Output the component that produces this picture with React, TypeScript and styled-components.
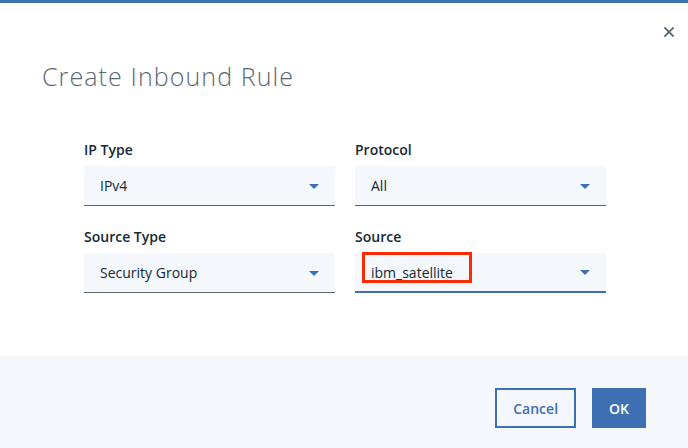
import React from "react";
import styled, { createGlobalStyle } from "styled-components";

const GlobalStyle = createGlobalStyle`
  html, body {
    margin: 0;
    padding: 0;
    background: #ffffff;
  }
  body {
    font-family: "Open Sans", "Noto Sans", sans-serif;
    color: #152935;
  }
  * {
    box-sizing: border-box;
  }
`;

interface Field {
  label: string;
  value: string;
  focused?: boolean;
  highlighted?: boolean;
}

const fields: Field[] = [
  { label: "IP Type", value: "IPv4" },
  { label: "Protocol", value: "All" },
  { label: "Source Type", value: "Security Group" },
  { label: "Source", value: "ibm_satellite", focused: true, highlighted: true },
];

function App() {
  return (
    <Modal>
      <GlobalStyle />
      <Header>
        <CloseRow>
          <CloseButton aria-label="Close">
            <svg width="10" height="10" viewBox="0 0 10 10">
              <path d="M1 1 L9 9 M9 1 L1 9" stroke="#5a6872" strokeWidth="1.8" strokeLinecap="square" />
            </svg>
          </CloseButton>
        </CloseRow>
        <Title>Create Inbound Rule</Title>
      </Header>
      <Body>
        {fields.map((field) => (
          <FieldGroup key={field.label}>
            <Label>{field.label}</Label>
            <Select $focused={field.focused}>
              <SelectValue>{field.value}</SelectValue>
              <Caret width="10" height="5" viewBox="0 0 10 5">
                <path d="M0 0 L10 0 L5 5 Z" fill="#3d70b2" />
              </Caret>
              {field.highlighted && <Highlight />}
            </Select>
          </FieldGroup>
        ))}
      </Body>
      <Footer>
        <Button $kind="secondary">Cancel</Button>
        <Button $kind="primary">OK</Button>
      </Footer>
    </Modal>
  );
}

export default App;

const Modal = styled.div`
  width: 688px;
  height: 448px;
  border-top: 3px solid #3d70b2;
  background: #ffffff;
  display: flex;
  flex-direction: column;
`;

const Header = styled.div`
  display: flex;
  flex-direction: column;
  padding: 0 14px 0 42px;
`;

const CloseRow = styled.div`
  display: flex;
  justify-content: flex-end;
  padding-top: 24px;
`;

const CloseButton = styled.button`
  width: 10px;
  height: 10px;
  padding: 0;
  border: none;
  background: none;
  display: flex;
  cursor: pointer;
`;

const Title = styled.h2`
  margin: 23px 0 0;
  font-size: 25px;
  line-height: 32px;
  font-weight: 300;
  letter-spacing: 1.1px;
  color: #5a6872;
`;

const Body = styled.div`
  display: grid;
  grid-template-columns: 251px 251px;
  column-gap: 20px;
  row-gap: 23px;
  padding: 50px 0 0 84px;
`;

const FieldGroup = styled.div`
  display: flex;
  flex-direction: column;
  gap: 8px;
`;

const Label = styled.label`
  font-size: 14px;
  line-height: 16px;
  font-weight: 600;
  color: #152935;
`;

const Select = styled.div<{ $focused?: boolean }>`
  position: relative;
  height: 40px;
  display: flex;
  align-items: center;
  justify-content: space-between;
  padding: 0 16px;
  background: #f4f7fb;
  border-bottom: ${(p) => (p.$focused ? "2px solid #3d70b2" : "1px solid #5a6872")};
`;

const SelectValue = styled.span`
  font-size: 14px;
  color: #152935;
`;

const Caret = styled.svg`
  display: block;
  margin-top: 1px;
`;

const Highlight = styled.div`
  position: absolute;
  left: 7px;
  top: -1px;
  width: 110px;
  height: 31px;
  border: 3px solid #fa2a05;
  pointer-events: none;
`;

const Footer = styled.div`
  margin-top: auto;
  height: 92px;
  background: #f4f7fb;
  display: flex;
  justify-content: flex-end;
  align-items: flex-start;
  gap: 16px;
  padding: 32px 42px 0 0;
`;

const Button = styled.button<{ $kind: "primary" | "secondary" }>`
  height: 40px;
  padding: 0 ${(p) => (p.$kind === "primary" ? "15px" : "16px")};
  font-family: "Open Sans", "Noto Sans", sans-serif;
  font-size: 14px;
  font-weight: 600;
  border: 2px solid #3d70b2;
  background: ${(p) => (p.$kind === "primary" ? "#3d70b2" : "transparent")};
  color: ${(p) => (p.$kind === "primary" ? "#ffffff" : "#3d70b2")};
  cursor: pointer;
`;
